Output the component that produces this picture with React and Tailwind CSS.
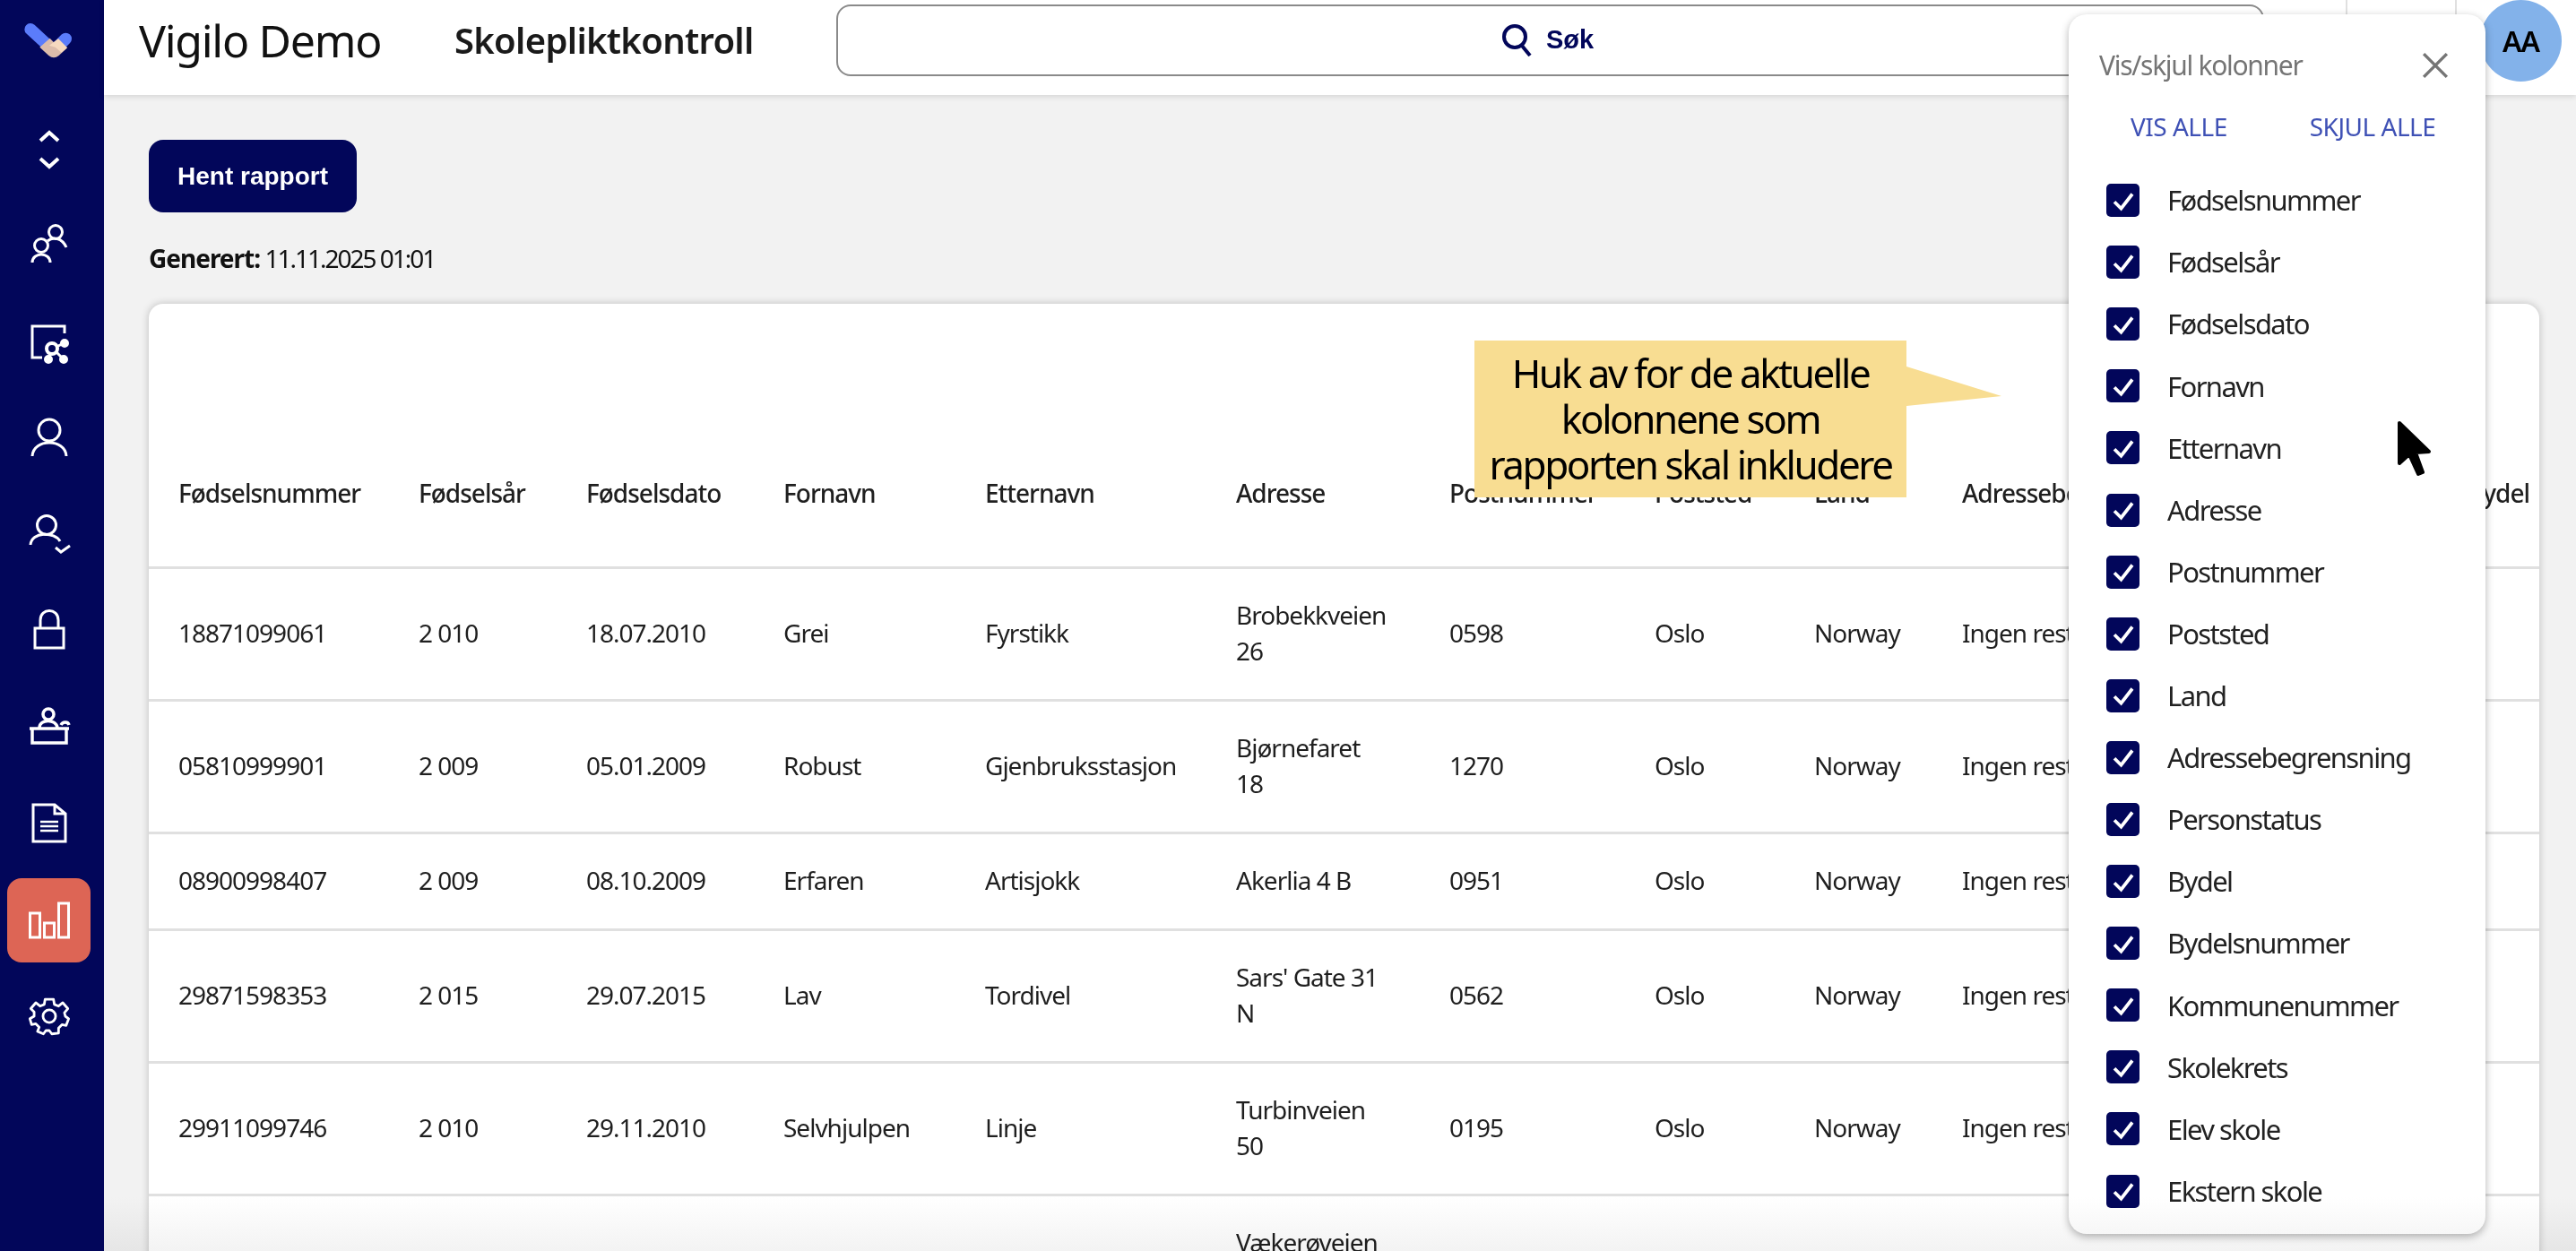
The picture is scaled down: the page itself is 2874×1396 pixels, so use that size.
const columns = [
  ["Fødselsnummer", "w-[268px]"],
  ["Fødselsår", "w-[187px]"],
  ["Fødselsdato", "w-[220px]"],
  ["Fornavn", "w-[225px]"],
  ["Etternavn", "w-[280px]"],
  ["Adresse", "w-[238px]"],
  ["Postnummer", "w-[229px]"],
  ["Poststed", "w-[178px]"],
  ["Land", "w-[165px]"],
  ["Adressebegrensning", "w-[260px]"],
  ["Personstatus", "w-[304px]"],
  ["Bydel", "w-[113px]"],
];

const rows = [
  ["18871099061", "2 010", "18.07.2010", "Grei", "Fyrstikk", "Brobekkveien 26", "0598"],
  ["05810999901", "2 009", "05.01.2009", "Robust", "Gjenbruksstasjon", "Bjørnefaret 18", "1270"],
  ["08900998407", "2 009", "08.10.2009", "Erfaren", "Artisjokk", "Akerlia 4 B", "0951"],
  ["29871598353", "2 015", "29.07.2015", "Lav", "Tordivel", "Sars' Gate 31 N", "0562"],
  ["29911099746", "2 010", "29.11.2010", "Selvhjulpen", "Linje", "Turbinveien 50", "0195"],
  ["07081599060", "2 015", "07.08.2015", "Sædelig", "Ordentlig", "Vækerøveien 105", "0767"],
];

const kolonner = [
  "Fødselsnummer",
  "Fødselsår",
  "Fødselsdato",
  "Fornavn",
  "Etternavn",
  "Adresse",
  "Postnummer",
  "Poststed",
  "Land",
  "Adressebegrensning",
  "Personstatus",
  "Bydel",
  "Bydelsnummer",
  "Kommunenummer",
  "Skolekrets",
  "Elev skole",
  "Ekstern skole",
];

function Logo() {
  return (
    <svg viewBox="0 0 300 210" className="h-[70px] w-[100px]">
      <path d="M72 68 L150 140 L190 100" fill="none" stroke="#5b7cfb" strokeWidth="40" strokeLinecap="round" strokeLinejoin="round" />
      <path d="M137 98 L103 128 L133 156 Q150 170 167 156 L195 130 L165 100 L150 112 Z" fill="#dcbcab" />
      <path d="M135 122 L165 100 L195 130 L176 146 L155 128 Z" fill="#f6d9bf" />
    </svg>
  );
}

function NavIcon({ children }) {
  return (
    <svg viewBox="0 0 60 60" fill="none" stroke="white" strokeWidth="3" className="h-[60px] w-[60px]">
      {children}
    </svg>
  );
}

const navIcons = [
  <NavIcon key="sort">
    <path d="M20 20 L30 11 L40 20 M20 40 L30 49 L40 40" strokeWidth="4" />
  </NavIcon>,
  <NavIcon key="group">
    <circle cx="21" cy="30" r="7.5" />
    <path d="M11 49 C11 37 31 37 31 49" />
    <circle cx="37" cy="15" r="7.5" />
    <path d="M28 25 C34 20 44 21 49 32" />
  </NavIcon>,
  <NavIcon key="board">
    <path d="M47 20 V12 H11 V47 H22" />
    <circle cx="33" cy="37" r="6" strokeWidth="4" />
    <circle cx="47" cy="31" r="3.5" fill="white" />
    <circle cx="29" cy="49" r="3.5" fill="white" />
    <circle cx="46" cy="49" r="3.5" fill="white" />
    <path d="M38 35 L46 31 M31 43 L29 48 M38 41 L45 48" />
  </NavIcon>,
  <NavIcon key="user">
    <circle cx="30" cy="21" r="12" />
    <path d="M11 50 C12 30 48 30 49 50" />
  </NavIcon>,
  <NavIcon key="user-check">
    <circle cx="27" cy="19" r="10.5" />
    <path d="M9 41 C10 26 36 26 42 37" />
    <path d="M37 44 L43 49 L53 42" />
  </NavIcon>,
  <NavIcon key="lock">
    <path d="M20 27 V18 C20 4 40 4 40 18 V27" />
    <rect x="14" y="27" width="32" height="22" />
  </NavIcon>,
  <NavIcon key="desk">
    <circle cx="29" cy="15" r="6" strokeWidth="3.5" />
    <path d="M19 30 C19 20 38 20 39 30 M43 27 C45 23 51 23 52 27" strokeWidth="3.5" />
    <path d="M8 31 H52 M11 31 V47 H49 V31" strokeWidth="3.5" />
  </NavIcon>,
  <NavIcon key="doc">
    <path d="M12 9 H36 L48 19 V50 H12 Z M36 9 V19 H48" />
    <path d="M20 28 H40 M20 33 H40 M20 38 H40" strokeWidth="2.5" />
  </NavIcon>,
  <NavIcon key="chart">
    <rect x="8.5" y="22" width="11" height="27" />
    <rect x="24.5" y="33" width="11" height="16" />
    <rect x="40.5" y="11" width="11" height="38" />
  </NavIcon>,
  <NavIcon key="gear">
    <g transform="translate(30 30) scale(0.94) translate(-30 -30)">
      <circle cx="30" cy="30" r="7.5" />
      <path d="M25 10 L35 10 L36 16 L41 18 L46 14 L52 21 L48 26 L49 30 L53 33 L50 41 L45 40 L41 44 L41 50 L33 51 L30 47 L26 47 L23 51 L16 48 L18 43 L14 39 L9 40 L7 33 L12 30 L12 25 L8 21 L14 14 L19 18 L24 16 Z" strokeLinejoin="round" />
    </g>
  </NavIcon>,
];

function Sidebar() {
  return (
    <nav className="flex h-full w-[116px] shrink-0 flex-col bg-[#02065a]">
      <div className="h-[120px] pl-[10px] pt-[10px]">
        <Logo />
      </div>
      <div className="flex flex-col gap-[14px] pl-2">
        {navIcons.map((icon, i) => (
          <div
            key={i}
            className={`flex h-[93.5px] w-[93px] items-center justify-center rounded-[16px] ${i === 8 ? "bg-[#dd6555]" : ""}`}
          >
            {icon}
          </div>
        ))}
      </div>
    </nav>
  );
}

function Header() {
  return (
    <header className="flex h-[106px] shrink-0 items-start bg-white pl-[39px] shadow-[0_2px_6px_rgba(0,0,0,0.12)]">
      <h1 className="mt-[11px] w-[352px] text-[50px] leading-[68px] tracking-[-1.3px] text-[#111]">Vigilo Demo</h1>
      <h2 className="mt-[22px] w-[426px] text-[40px] font-semibold leading-[46px] tracking-[-0.7px] text-[#1a1a1a]">Skolepliktkontroll</h2>
      <div className="mt-[5px] flex h-[80px] w-[1593px] items-center justify-center gap-[16px] rounded-[16px] border-2 border-[#8a8a8a] pr-[6px]">
        <svg viewBox="0 0 34 36" fill="none" stroke="#02065a" strokeWidth="4" className="h-[36px] w-[34px]">
          <circle cx="15" cy="14" r="12" />
          <path d="M23 24 L32 35" />
        </svg>
        <span className="font-['Liberation_Sans'] text-[29px] font-bold text-[#02065a]">Søk</span>
      </div>
      <div className="ml-[91px] h-[90px] w-[2px] bg-[#e0e0e0]" />
      <div className="ml-[120px] h-[90px] w-[2px] bg-[#e0e0e0]" />
      <div className="ml-[26px] flex h-[91px] w-[91px] items-center justify-center rounded-full bg-[#83b2ea] text-[32px] font-semibold tracking-[-1px] text-black">
        AA
      </div>
    </header>
  );
}

function ReportTable() {
  return (
    <div className="mt-[31px] overflow-hidden rounded-t-[16px] bg-white shadow-[0_0_10px_rgba(0,0,0,0.22)]">
      <table className="w-[2667px] table-fixed border-collapse text-left text-[28px] tracking-[-1px] text-[#1f1f1f]">
        <thead>
          <tr className="h-[294px] border-b-[3px] border-[#e0e0e0]">
            {columns.map(([name, width]) => (
              <th key={name} className={`${width} whitespace-nowrap pb-[61px] pl-[33px] align-bottom font-medium`}>
                {name}
              </th>
            ))}
          </tr>
        </thead>
        <tbody className="leading-[40px]">
          {rows.map((row, i) => (
            <tr key={row[0]} className={`border-b-[3px] border-[#e0e0e0] ${i === 2 ? "h-[108px]" : "h-[148px]"}`}>
              {row.map((value, j) => (
                <td key={j} className={`pb-[2px] pl-[33px] ${j === 5 ? "pr-[40px]" : "whitespace-nowrap"}`}>
                  {value}
                </td>
              ))}
              <td className="whitespace-nowrap pb-[2px] pl-[33px]">Oslo</td>
              <td className="whitespace-nowrap pb-[2px] pl-[33px]">Norway</td>
              <td className="whitespace-nowrap pb-[2px] pl-[33px]">Ingen restriksjoner</td>
              <td className="whitespace-nowrap pb-[2px] pl-[33px]">Bosatt</td>
              <td />
            </tr>
          ))}
        </tbody>
      </table>
    </div>
  );
}

function ColumnMenu() {
  return (
    <div className="absolute left-[2308px] top-[16px] h-[1361px] w-[465px] rounded-[20px] bg-white shadow-[0_3px_10px_rgba(0,0,0,0.3)]">
      <div className="flex items-center justify-between pl-[34px] pr-[41px] pt-[37px]">
        <span className="text-[30px] leading-[40px] tracking-[-1.3px] text-[#757575]">Vis/skjul kolonner</span>
        <svg viewBox="0 0 28 28" stroke="#757575" strokeWidth="3.2" className="h-[30px] w-[30px]">
          <path d="M2 2 L26 26 M26 2 L2 26" />
        </svg>
      </div>
      <div className="mt-[28px] flex gap-[92px] pl-[69px] text-[28px] leading-[40px] tracking-[-0.5px] text-[#3f51b5]">
        <span>VIS ALLE</span>
        <span>SKJUL ALLE</span>
      </div>
      <ul className="mt-[28px]">
        {kolonner.map((name) => (
          <li key={name} className="flex h-[69.1px] items-center gap-[31px] pl-[42px] text-[31px] tracking-[-1.6px] text-[#222]">
            <span className="flex h-[37px] w-[37px] items-center justify-center rounded-[5px] bg-[#02065a]">
              <svg viewBox="0 0 24 24" fill="none" stroke="white" strokeWidth="3" className="h-[30px] w-[30px]">
                <path d="M4 13 L10 19 L20 6" />
              </svg>
            </span>
            {name}
          </li>
        ))}
      </ul>
    </div>
  );
}

function Callout() {
  return (
    <div className="absolute left-[1645px] top-[380px] flex h-[175px] w-[482px] items-center justify-center bg-[#f8dd92] text-center text-[44px] leading-[51px] tracking-[-2.4px] text-black">
      <svg viewBox="0 0 106 44" className="absolute left-full top-[29px] h-[44px] w-[106px]">
        <path d="M0 0 L106 33 L0 44 Z" fill="#f8dd92" />
      </svg>
      <p className="whitespace-nowrap">
        Huk av for de aktuelle
        <br />
        kolonnene som
        <br />
        rapporten skal inkludere
      </p>
    </div>
  );
}

function Cursor() {
  return (
    <svg viewBox="0 0 40 66" className="absolute left-[2674px] top-[469px] h-[66px] w-[40px]">
      <path d="M3 3 L3 48 L14 38 L24 60 L29 58 L21 36 L36 35 Z" fill="black" stroke="black" strokeWidth="4" strokeLinejoin="round" />
    </svg>
  );
}

export default function App() {
  return (
    <div className="relative flex h-screen w-full overflow-hidden bg-[#f2f2f2] font-['Noto_Sans',sans-serif]">
      <Sidebar />
      <main className="flex min-w-0 flex-1 flex-col">
        <Header />
        <div className="pl-[50px] pr-[41px] pt-[50px]">
          <button className="h-[81px] w-[232px] rounded-[16px] bg-[#02065a] font-['Liberation_Sans'] text-[28px] font-bold text-white">
            Hent rapport
          </button>
          <p className="mt-[31px] text-[28px] leading-[40px] tracking-[-2px] text-[#111]">
            <b className="tracking-[-1px]">Generert:</b> 11.11.2025 01:01
          </p>
          <ReportTable />
        </div>
      </main>
      <Callout />
      <ColumnMenu />
      <Cursor />
      <div className="pointer-events-none absolute bottom-0 left-[116px] right-0 h-[60px] bg-gradient-to-b from-white to-[#f3f3f3] mix-blend-multiply" />
    </div>
  );
}
